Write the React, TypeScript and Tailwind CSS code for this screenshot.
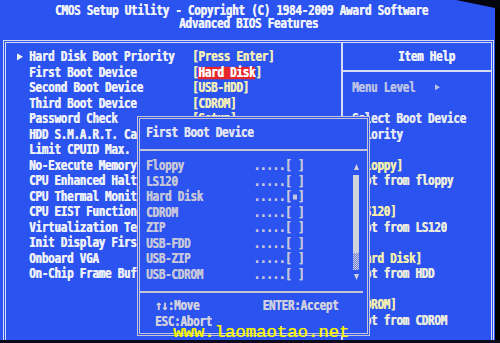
import React from "react";

const ROW = "h-[15.5px] leading-[15.5px] scale-y-[1.24] whitespace-pre";

type LeftRow = { label: string; value: string; hl?: boolean; arrow?: boolean };

const leftRows: LeftRow[] = [
  { label: "Hard Disk Boot Priority", value: "Press Enter", arrow: true },
  { label: "First Boot Device", value: "Hard Disk", hl: true },
  { label: "Second Boot Device", value: "USB-HDD" },
  { label: "Third Boot Device", value: "CDROM" },
  { label: "Password Check", value: "Setup" },
  { label: "HDD S.M.A.R.T. Capability", value: "Disabled" },
  { label: "Limit CPUID Max. to 3", value: "Disabled" },
  { label: "No-Execute Memory Protect", value: "Enabled" },
  { label: "CPU Enhanced Halt (C1E)", value: "Enabled" },
  { label: "CPU Thermal Monitor 2(TM2)", value: "Enabled" },
  { label: "CPU EIST Function", value: "Enabled" },
  { label: "Virtualization Technology", value: "Enabled" },
  { label: "Init Display First", value: "PCI Slot" },
  { label: "Onboard VGA", value: "Enable If No Ext PEG" },
  { label: "On-Chip Frame Buffer Size", value: "8MB" },
];

type HelpRow = { text: string; tone?: "yellow" | "white" | "cream" };

const helpRows: HelpRow[] = [
  { text: "" },
  { text: "Select Boot Device", tone: "white" },
  { text: "Priority", tone: "white" },
  { text: "" },
  { text: "[Floppy]", tone: "yellow" },
  { text: "Boot from floppy", tone: "cream" },
  { text: "" },
  { text: "[LS120]", tone: "yellow" },
  { text: "Boot from LS120", tone: "cream" },
  { text: "" },
  { text: "[Hard Disk]", tone: "yellow" },
  { text: "Boot from HDD", tone: "cream" },
  { text: "" },
  { text: "[CDROM]", tone: "yellow" },
  { text: "Boot from CDROM", tone: "cream" },
];

const toneClass: Record<string, string> = {
  yellow: "text-[#f2eeae]",
  white: "text-[#e6e9f4]",
  cream: "text-[#ecebdc]",
};

const devices = ["Floppy", "LS120", "Hard Disk", "CDROM", "ZIP", "USB-FDD", "USB-ZIP", "USB-CDROM"];

function RightTri({ className, color }: { className: string; color: string }) {
  return (
    <svg viewBox="0 0 6 6" className={className} preserveAspectRatio="none">
      <polygon points="0,0 6,3 0,6" fill={color} />
    </svg>
  );
}

export default function App() {
  return (
    <div className="relative flex flex-col w-[500px] h-[343px] overflow-hidden bg-black font-['DejaVu_Sans_Mono',monospace] font-bold text-[11px] tracking-[-0.3px] [text-shadow:0.4px_0_0_currentColor]">
      <div className="flex h-[340px]">
        <div className="w-[495px] h-full bg-[#2b53f0] flex flex-col text-[#eef0f8]">
          {/* Header */}
          <div className="h-[40px] pt-[4px] text-[#f0f2fa]">
            <div className="h-[13px] leading-[13px] scale-y-[1.24] whitespace-pre pl-[55px]">
              CMOS Setup Utility - Copyright (C) 1984-2009 Award Software
            </div>
            <div className="h-[13px] leading-[13px] scale-y-[1.24] whitespace-pre pl-[179px]">
              Advanced BIOS Features
            </div>
          </div>

          {/* Frame */}
          <div className="ml-[3px] mr-[1px] flex-1 flex border-t-[3px] border-l-[3px] border-r-[3px] border-double border-[#d8dcf2]">
            {/* Left settings column */}
            <div className="w-[335px] pt-[6.25px]">
              {leftRows.map((r) => (
                <div key={r.label} className={ROW + " flex items-center"}>
                  <div className="w-[23px] pl-[11px] flex items-center">
                    {r.arrow && <RightTri className="w-[6px] h-[5.7px]" color="#eef0f8" />}
                  </div>
                  <div className="w-[163px] overflow-hidden">{r.label}</div>
                  <div className="text-[#f2eeb8] flex items-center">
                    {r.hl ? (
                      <>
                        <span>[</span>
                        <span className="inline-block h-[9.7px] leading-[9.7px] bg-[#e8262a] text-white">{r.value}</span>
                        <span>]</span>
                      </>
                    ) : (
                      <span>[{r.value}]</span>
                    )}
                  </div>
                </div>
              ))}
            </div>

            {/* Divider */}
            <div className="w-[2px] bg-[#d8dcf2]" />

            {/* Item help column */}
            <div className="flex-1 pl-[9px] pt-[6.25px]">
              <div className={ROW + " pl-[46px] text-[#f0f2fa]"}>Item Help</div>
              <div className="h-[15.5px] pt-[5.5px] -ml-[9px]">
                <div className="h-[2px] bg-[#d8dcf2]" />
              </div>
              <div className={ROW + " flex items-center text-[#b9c1e6]"}>
                <span>Menu Level</span>
                <RightTri className="ml-[20px] w-[5px] h-[4.8px]" color="#b9c1e6" />
              </div>
              {helpRows.map((h, i) => (
                <div key={i} className={ROW + " " + (h.tone ? toneClass[h.tone] : "")}>
                  {h.text}
                </div>
              ))}
            </div>
          </div>
        </div>
        <div className="flex-1 bg-black" />
      </div>
      <div className="flex-1 bg-[#0b0b1c]" />

      {/* Popup */}
      <div className="absolute z-10 left-[137px] top-[116px] w-[233px] h-[220px] border-[3px] border-double border-[#c6c6d6] bg-[#2b53f0] flex flex-col text-[#c6c6da]">
        <div className={ROW + " mt-[6.25px] pl-[6px] text-[#e2e3f0]"}>First Boot Device</div>
        <div className="mt-[7.75px] h-[2px] bg-[#c6c6d6]" />
        <div className="mt-[7.5px] flex h-[124px]">
          <div className="flex-1 pl-[6px]">
            {devices.map((d) => (
              <div key={d} className={ROW + " flex items-center"}>
                <span>{d.padEnd(17, " ") + ".....["}</span>
                <span className="inline-flex w-[6.32px] justify-center items-center">
                  {d === "Hard Disk" ? <span className="block w-[4px] h-[4px] bg-[#c6c6da]" /> : " "}
                </span>
                <span>]</span>
              </div>
            ))}
          </div>
          <div className="w-[6px] mr-[8px] flex flex-col items-center pt-[6px]">
            <svg viewBox="0 0 6 6" className="w-[5px] h-[6px]" preserveAspectRatio="none">
              <polygon points="0,6 3,0 6,6" fill="#d4d4de" />
            </svg>
            <div className="mt-[5px] w-[6px] h-[78px] bg-[#d2d2dc]" />
            <svg className="w-[6px] h-[17px]" viewBox="0 0 6 17">
              <defs>
                <pattern id="chk" width="2" height="2" patternUnits="userSpaceOnUse">
                  <rect width="2" height="2" fill="#6b7ad8" />
                  <rect width="1" height="1" fill="#d0d0dc" />
                  <rect x="1" y="1" width="1" height="1" fill="#d0d0dc" />
                </pattern>
              </defs>
              <rect width="6" height="17" fill="url(#chk)" />
            </svg>
            <svg viewBox="0 0 6 6" className="mt-[4px] w-[5px] h-[6px]" preserveAspectRatio="none">
              <polygon points="0,0 6,0 3,6" fill="#d4d4de" />
            </svg>
          </div>
        </div>
        <div className="mt-[9px] mr-[4px] h-[2px] bg-[#c6c6d6]" />
        <div className="mt-[5.25px] pl-[15px] text-[#d0d0e0]">
          <div className={ROW}>{"↑↓:Move" + " ".repeat(10) + "ENTER:Accept"}</div>
          <div className={ROW}>ESC:Abort</div>
        </div>
      </div>

      {/* Watermark */}
      <div className="absolute z-20 left-[173px] top-[323px] h-[20px] leading-[20px] font-['Liberation_Mono',monospace] font-normal tracking-normal text-[17.3px] text-[#f4f200] whitespace-pre">
        www.laomaotao.net
      </div>

      {/* Photo edge wedge */}
      <svg className="absolute z-20 right-0 top-0 w-[44px] h-[9px]" viewBox="0 0 44 9" preserveAspectRatio="none">
        <polygon points="0,0 44,0 44,9" fill="#05050d" />
      </svg>
    </div>
  );
}
